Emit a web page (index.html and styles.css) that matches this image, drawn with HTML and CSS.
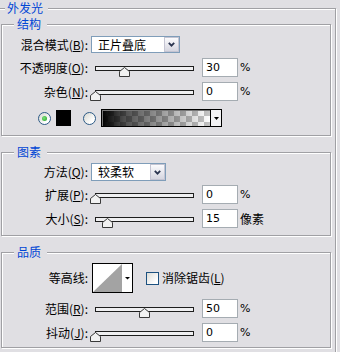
FILE: index.html
```html
<!DOCTYPE html>
<html lang="zh-CN">
<head>
<meta charset="utf-8">
<title>外发光</title>
<link rel="stylesheet" href="styles.css">
</head>
<body>
<div class="panel">
  <span class="panel-title">外发光</span>

  <section class="group g1">
    <span class="group-title">结构</span>
    <div class="row">
      <label class="lbl">混合模式(<u>B</u>):</label>
      <div class="select sel-blend">
        <span class="sel-text">正片叠底</span>
        <span class="sel-btn"><svg width="7" height="5" viewBox="0 0 7 5"><path d="M0.8 0.8 L3.5 3.6 L6.2 0.8" fill="none" stroke="#2b3550" stroke-width="1.8"/></svg></span>
      </div>
    </div>
    <div class="row mt5">
      <label class="lbl">不透明度(<u>O</u>):</label>
      <div class="slider"><span class="track"></span><svg class="thumb" style="left:28px" width="11" height="10" viewBox="0 0 11 10"><polygon points="0.5,9.5 0.5,4.5 5.5,0.5 10.5,4.5 10.5,9.5" fill="#f2f2f2" stroke="#3a3a3a"/></svg></div>
      <div class="num">30</div><span class="unit">%</span>
    </div>
    <div class="row mt5">
      <label class="lbl">杂色(<u>N</u>):</label>
      <div class="slider"><span class="track"></span><svg class="thumb" style="left:-1px" width="11" height="10" viewBox="0 0 11 10"><polygon points="0.5,9.5 0.5,4.5 5.5,0.5 10.5,4.5 10.5,9.5" fill="#f2f2f2" stroke="#3a3a3a"/></svg></div>
      <div class="num">0</div><span class="unit">%</span>
    </div>
    <div class="row colors mt8">
      <span class="radio checked"></span>
      <span class="swatch"></span>
      <span class="radio radio2"></span>
      <div class="grad">
        <span class="grad-fill"></span>
        <span class="grad-btn"><svg width="5" height="3" viewBox="0 0 5 3"><polygon points="0,0 5,0 2.5,3" fill="#000"/></svg></span>
      </div>
    </div>
  </section>

  <section class="group g2">
    <span class="group-title">图素</span>
    <div class="row">
      <label class="lbl">方法(<u>Q</u>):</label>
      <div class="select sel-method">
        <span class="sel-text">较柔软</span>
        <span class="sel-btn"><svg width="7" height="5" viewBox="0 0 7 5"><path d="M0.8 0.8 L3.5 3.6 L6.2 0.8" fill="none" stroke="#2b3550" stroke-width="1.8"/></svg></span>
      </div>
    </div>
    <div class="row mt4">
      <label class="lbl">扩展(<u>P</u>):</label>
      <div class="slider"><span class="track"></span><svg class="thumb" style="left:-1px" width="11" height="10" viewBox="0 0 11 10"><polygon points="0.5,9.5 0.5,4.5 5.5,0.5 10.5,4.5 10.5,9.5" fill="#f2f2f2" stroke="#3a3a3a"/></svg></div>
      <div class="num">0</div><span class="unit">%</span>
    </div>
    <div class="row mt5">
      <label class="lbl">大小(<u>S</u>):</label>
      <div class="slider"><span class="track"></span><svg class="thumb" style="left:11px" width="11" height="10" viewBox="0 0 11 10"><polygon points="0.5,9.5 0.5,4.5 5.5,0.5 10.5,4.5 10.5,9.5" fill="#f2f2f2" stroke="#3a3a3a"/></svg></div>
      <div class="num">15</div><span class="unit unit-cjk">像素</span>
    </div>
  </section>

  <section class="group g3">
    <span class="group-title">品质</span>
    <div class="row">
      <label class="lbl">等高线:</label>
      <svg class="contour" width="41" height="30" viewBox="0 0 41 30">
        <rect x="0.5" y="0.5" width="40" height="29" fill="#fff" stroke="#000"/>
        <polygon points="1,29 30,1 30,29" fill="#a3a3a3"/>
        <polygon points="33,14 38,14 35.5,16.5" fill="#000"/>
      </svg>
      <span class="checkbox"></span>
      <span class="chk-label">消除锯齿(<u>L</u>)</span>
    </div>
    <div class="row mt6">
      <label class="lbl">范围(<u>R</u>):</label>
      <div class="slider"><span class="track"></span><svg class="thumb" style="left:48px" width="11" height="10" viewBox="0 0 11 10"><polygon points="0.5,9.5 0.5,4.5 5.5,0.5 10.5,4.5 10.5,9.5" fill="#f2f2f2" stroke="#3a3a3a"/></svg></div>
      <div class="num">50</div><span class="unit">%</span>
    </div>
    <div class="row mt5">
      <label class="lbl">抖动(<u>J</u>):</label>
      <div class="slider"><span class="track"></span><svg class="thumb" style="left:-1px" width="11" height="10" viewBox="0 0 11 10"><polygon points="0.5,9.5 0.5,4.5 5.5,0.5 10.5,4.5 10.5,9.5" fill="#f2f2f2" stroke="#3a3a3a"/></svg></div>
      <div class="num">0</div><span class="unit">%</span>
    </div>
  </section>
</div>
</body>
</html>
```
FILE: styles.css
```css
* { box-sizing: border-box; }
html, body { margin: 0; padding: 0; }
body {
  background: #e0dfe3;
  width: 340px;
  height: 352px;
  overflow: hidden;
  font-family: "Noto Sans CJK SC", sans-serif;
  font-size: 12px;
  color: #000;
}
u { text-decoration: underline; text-underline-offset: 1px; }

.panel {
  position: relative;
  margin: 8px 0 0 -4px;
  width: 340px;
  border: 1px solid #a0a0a4;
  box-shadow: inset 1px 1px 0 #fff, 1px 1px 0 #fff;
  padding: 15px 4px 20px 4px;
  display: flex;
  flex-direction: column;
  gap: 16px;
}
.panel-title {
  position: absolute;
  top: -8px;
  left: 8px;
  padding: 0 5px 0 2px;
  line-height: 14px;
  background: #e0dfe3;
  color: #0046d5;
}

.group {
  position: relative;
  border: 1px solid #a0a0a4;
  box-shadow: inset 1px 1px 0 #fff, 1px 1px 0 #fff;
  display: flex;
  flex-direction: column;
}
.g1 { padding: 11px 0 8px; }
.g2 { padding: 10px 0 7px; }
.g3 { padding: 10px 0 5px; }
.group-title {
  position: absolute;
  top: -8px;
  left: 12px;
  padding: 0 6px 0 3px;
  line-height: 14px;
  background: #e0dfe3;
  color: #0046d5;
}

.row { display: flex; align-items: center; }
.mt4 { margin-top: 4px; }
.mt5 { margin-top: 5px; }
.mt6 { margin-top: 6px; }
.mt8 { margin-top: 8px; }

.lbl {
  flex: none;
  width: 86px;
  margin-right: 3px;
  text-align: right;
  white-space: nowrap;
  line-height: 14px;
}

.select {
  flex: none;
  display: flex;
  align-items: center;
  background: #fff;
  border: 1px solid #7f9db9;
}
.sel-blend { width: 89px; height: 17px; }
.sel-method { width: 75px; height: 18px; }
.sel-text { flex: 1; padding-left: 6px; line-height: 14px; }
.sel-btn {
  flex: none;
  width: 15px;
  align-self: stretch;
  display: flex;
  align-items: center;
  justify-content: center;
  border: 1px solid #c4c4d2;
  background: linear-gradient(#fbfbfd, #d6d6e0);
}

.slider { position: relative; flex: none; width: 106px; height: 19px; }
.track {
  position: absolute;
  left: 4px;
  top: 8px;
  width: 99px;
  height: 5px;
  border: 1px solid #1e1e1e;
  background: #efeff1;
}
.thumb { position: absolute; top: 9px; display: block; }

.num {
  flex: none;
  width: 36px;
  height: 19px;
  margin-left: 5px;
  border: 1px solid #a5acb2;
  background: #fff;
  padding-left: 3px;
  font-family: "DejaVu Sans", sans-serif;
  font-size: 11px;
  line-height: 17px;
}
.unit {
  margin-left: 2px;
  font-family: "DejaVu Sans", sans-serif;
  font-size: 11px;
}
.unit-cjk { font-family: "Noto Sans CJK SC", sans-serif; font-size: 12px; }

.colors { padding-left: 36px; height: 18px; }
.radio {
  position: relative;
  flex: none;
  width: 13px;
  height: 13px;
  border-radius: 50%;
  border: 1px solid #2c5a86;
  background: linear-gradient(135deg, #d6d6d0, #ffffff 75%);
}
.radio.checked::after {
  content: "";
  position: absolute;
  left: 3px;
  top: 3px;
  width: 5px;
  height: 5px;
  border-radius: 50%;
  background: radial-gradient(circle at 40% 40%, #7be07b, #21a121);
}
.swatch { flex: none; width: 15px; height: 16px; margin-left: 5px; background: #000; }
.radio2 { margin-left: 12px; }
.grad {
  flex: none;
  display: flex;
  width: 121px;
  height: 18px;
  margin-left: 5px;
  border: 1px solid #000;
}
.grad-fill {
  flex: 1;
  background:
    linear-gradient(to right, #000 0%, rgba(0,0,0,0.7) 20%, rgba(0,0,0,0) 100%),
    repeating-conic-gradient(#c4c4c4 0 25%, #ffffff 0 50%) 0 0 / 12px 12px;
  box-shadow: inset 1px 1px 0 #777;
}
.grad-btn {
  flex: none;
  width: 11px;
  border-left: 1px solid #000;
  background: #f2f2f4;
  display: flex;
  align-items: center;
  justify-content: center;
}

.contour { flex: none; display: block; margin-left: 1px; }
.checkbox {
  flex: none;
  width: 13px;
  height: 13px;
  margin-left: 13px;
  border: 1px solid #1c5180;
  background: linear-gradient(135deg, #dcdcd7, #ffffff 80%);
}
.chk-label { margin-left: 3px; line-height: 14px; }
```
